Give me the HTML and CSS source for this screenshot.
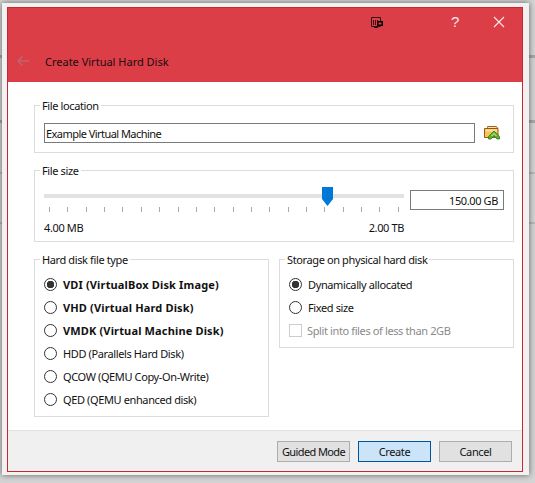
FILE: index.html
```html
<!DOCTYPE html>
<html lang="en">
<head>
<meta charset="utf-8">
<title>Create Virtual Hard Disk</title>
<link rel="stylesheet" href="styles.css">
</head>
<body>
<div class="frame">
  <div class="window">
    <header class="titlebar">
      <div class="controls">
        <svg class="vm-icon" width="12" height="12" viewBox="0 0 12 12">
          <path d="M.5.5h9v9h-9z" fill="none" stroke="#3a1015"/>
          <path d="M2.5 3v5M4.5 3v5M6.5 3v2" stroke="#3a1015"/>
          <path d="M3 10.500h4" stroke="#3a1015"/>
          <rect x="6" y="4" width="6" height="5" fill="#000"/>
          <rect x="7.500" y="5.500" width="3" height="2" fill="#dc3e48"/>
        </svg>
        <span class="help">?</span>
        <svg class="close" width="12" height="12" viewBox="0 0 12 12">
          <path d="M1 1l10 10M11 1L1 11" stroke="#fbe8e9" stroke-width="1.100"/>
        </svg>
      </div>
      <div class="heading">
        <svg class="back" width="14" height="12" viewBox="0 0 14 12">
          <path d="M13 6H2M6.500 1.500L2 6l4.500 4.500" fill="none" stroke="#c0636b" stroke-width="1.500"/>
        </svg>
        <h1 class="title">Create Virtual Hard Disk</h1>
      </div>
    </header>

    <main class="content">
      <fieldset class="group location">
        <legend>File location</legend>
        <div class="location-row">
          <div class="field">Example Virtual Machine</div>
          <svg class="folder" width="17" height="16" viewBox="0 0 17 16">
            <path d="M3.500 2.500V1.500h9l1 1.500v3h-10.500z" fill="#f8e2a8" stroke="#a4622a"/>
            <path d="M.5 3.500h13.500v9H.5z" fill="#f5c452" stroke="#a0521f"/>
            <path d="M1.500 4.500h11.500v2H1.500z" fill="#fbe19a"/>
            <path d="M10 6l5.500 5.500v2.500h-2.500l-3-3-3 3H4.500v-2.500z" fill="#5fae2c" stroke="#2f7d12" stroke-width=".8"/>
            <path d="M10 8l3 3h-1l-2-2-2 2H7z" fill="#d8f5b8"/>
          </svg>
        </div>
      </fieldset>

      <fieldset class="group size">
        <legend>File size</legend>
        <div class="size-row">
          <div class="slider">
            <div class="track">
              <svg class="thumb" width="11" height="19" viewBox="0 0 11 19">
                <path d="M0 0h11v12l-5.500 7L0 12z" fill="#0078d7"/>
              </svg>
            </div>
            <div class="ticks">
              <i></i><i></i><i></i><i></i><i></i><i></i><i></i><i></i><i></i><i></i><i></i><i></i><i></i><i></i><i></i><i></i><i></i><i></i><i></i><i></i>
            </div>
            <div class="range"><span>4.00 MB</span><span>2.00 TB</span></div>
          </div>
          <div class="field value">150.00 GB</div>
        </div>
      </fieldset>

      <div class="columns">
        <fieldset class="group type">
          <legend>Hard disk file type</legend>
          <label class="option strong"><span class="radio on"></span>VDI (VirtualBox Disk Image)</label>
          <label class="option strong"><span class="radio"></span>VHD (Virtual Hard Disk)</label>
          <label class="option strong"><span class="radio"></span>VMDK (Virtual Machine Disk)</label>
          <label class="option"><span class="radio"></span>HDD (Parallels Hard Disk)</label>
          <label class="option"><span class="radio"></span>QCOW (QEMU Copy-On-Write)</label>
          <label class="option"><span class="radio"></span>QED (QEMU enhanced disk)</label>
        </fieldset>
        <fieldset class="group storage">
          <legend>Storage on physical hard disk</legend>
          <label class="option"><span class="radio on"></span>Dynamically allocated</label>
          <label class="option"><span class="radio"></span>Fixed size</label>
          <label class="option disabled"><span class="check"></span>Split into files of less than 2GB</label>
        </fieldset>
      </div>
    </main>

    <footer class="actions">
      <button class="btn guided" type="button">Guided Mode</button>
      <button class="btn primary" type="button">Create</button>
      <button class="btn" type="button">Cancel</button>
    </footer>
  </div>
</div>
</body>
</html>
```
FILE: styles.css
```css
* { box-sizing: border-box; }
html, body { margin: 0; height: 100%; }
body {
  background:
    linear-gradient(#a8a8a8, #a8a8a8) 0 55px / 100% 3px no-repeat,
    linear-gradient(#a8a8a8, #a8a8a8) 0 120px / 100% 3px no-repeat,
    linear-gradient(#b8b8b8, #b8b8b8) 0 172px / 100% 2px no-repeat,
    linear-gradient(#b8b8b8, #b8b8b8) 0 222px / 100% 2px no-repeat,
    #d4d4d4;
  font-family: "Noto Sans", "Open Sans", sans-serif;
  font-size: 11px;
  letter-spacing: -.38px;
  color: #111;
  overflow: hidden;
}
.frame {
  width: 527px;
  height: 472px;
  margin: 3px 0 0 2px;
  padding: 4px 6px 3px 5px;
  background: #f1f1f1;
  box-shadow: 0 0 6px rgba(0, 0, 0, .55);
}
.window {
  width: 516px;
  height: 465px;
  border: 1px solid #c9262f;
  background: #fff;
  display: flex;
  flex-direction: column;
}
.titlebar {
  height: 74px;
  background: #dc3e48;
  flex: none;
}
.controls { height: 43px; position: relative; }
.vm-icon { position: absolute; left: 363px; top: 9px; }
.help { position: absolute; left: 443px; top: 4px; color: #fbe8e9; font-size: 15px; line-height: 20px; font-family: "Liberation Sans", sans-serif; }
.close { position: absolute; left: 485px; top: 8px; }
.heading { display: flex; align-items: center; height: 20px; padding-left: 8px; }
.back { flex: none; }
.title { margin: 0 0 0 15px; font-size: 11px; font-weight: 400; letter-spacing: 0; color: #1a0c0d; }
.content {
  flex: 1;
  padding: 16px 8px 0 26px;
  display: flex;
  flex-direction: column;
}
.group {
  margin: 0;
  padding: 0;
  border: 1px solid #dcdcdc;
  min-width: 0;
}
.group legend { padding: 0 2px; margin-left: 5px; line-height: 15px; }
.location { height: 55px; width: 480px; }
.location-row { display: flex; align-items: center; padding: 10px 0 0 9px; }
.field {
  border: 1px solid #7a7a7a;
  height: 20px;
  line-height: 20px;
  padding: 0 1px;
  background: #fff;
  flex: none;
}
.location-row .field { width: 431px; letter-spacing: -.55px; }
.folder { margin-left: 9px; }
.size { height: 79px; width: 480px; margin-top: 10px; }
.size-row { display: flex; padding: 0 9px; }
.slider { width: 360px; flex: none; padding-top: 16px; }
.track { height: 4px; background: #e2e2e2; position: relative; }
.thumb { position: absolute; left: 278px; top: -7px; }
.ticks { display: flex; justify-content: space-between; padding: 9px 5px 0; height: 17px; }
.ticks i { width: 1px; height: 5px; background: #a9a9a9; }
.range { display: flex; justify-content: space-between; margin-top: 5px; line-height: 15px; }
.value { width: 94px; margin-left: 6px; margin-top: 12px; text-align: right; padding-right: 5px; }
.columns { display: flex; margin: 10px 0 0; gap: 10px; width: 480px; align-items: flex-start; }
.type { width: 235px; height: 165px; }
.storage { width: 235px; height: 96px; }
.option { display: flex; align-items: center; height: 23px; margin-left: 9px; white-space: nowrap; }
.group legend + .option { margin-top: 6px; }
.option.strong { font-weight: 700; letter-spacing: .15px; }
.option.disabled { color: #8a8a8a; }
.radio {
  width: 13px;
  height: 13px;
  border: 1px solid #333;
  border-radius: 50%;
  margin-right: 6px;
  flex: none;
  background: #fff;
}
.radio.on { background: radial-gradient(circle, #333 0 3.500px, #fff 4px); }
.check { width: 13px; height: 13px; border: 1px solid #ccc; margin-right: 5px; flex: none; }
.actions {
  height: 41px;
  flex: none;
  background: #f0f0f0;
  border-top: 1px solid #e3e3e3;
  display: flex;
  justify-content: flex-end;
  align-items: center;
  gap: 8px;
  padding: 0 10px 0 0;
}
.btn {
  width: 73px;
  height: 21px;
  padding: 0;
  border: 1px solid #adadad;
  background: #e1e1e1;
  font: inherit;
  letter-spacing: inherit;
  white-space: nowrap;
  color: #111;
}
.btn.guided { letter-spacing: -.6px; }
.btn.primary { background: #cce4f7; border-color: #005499; }
```
